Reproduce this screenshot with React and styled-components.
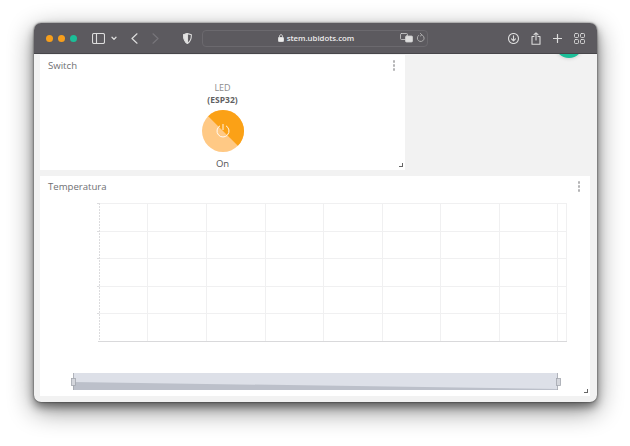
import styled, { createGlobalStyle } from 'styled-components';

const GlobalStyle = createGlobalStyle`
    html, body {
        margin: 0;
        background: #fff;
        font-family: "Open Sans", "Liberation Sans", sans-serif;
    }
`;

const Page = styled.div`
    width: 630px;
    height: 446px;
    padding: 23px 33px 0 34px;
    box-sizing: border-box;
    overflow: hidden;
`;

const Window = styled.div`
    height: 379px;
    border-radius: 7px;
    overflow: hidden;
    background: #f2f2f2;
    box-shadow: 0 5px 9px rgba(0, 0, 0, 0.42), 0 8px 26px rgba(0, 0, 0, 0.48), 0 0 2px rgba(0, 0, 0, 0.7);
    display: flex;
    flex-direction: column;
`;

const Toolbar = styled.div`
    position: relative;
    z-index: 2;
    height: 31px;
    flex: none;
    box-sizing: border-box;
    background: #5c5a5f;
    border-bottom: 1px solid #47464a;
    display: flex;
    align-items: center;
    padding-left: 12px;
`;

const Lights = styled.div`
    display: flex;
    gap: 5px;
    width: 46px;
`;

const Light = styled.span`
    width: 7px;
    height: 7px;
    border-radius: 50%;
    background: ${(p) => p.$color};
`;

const ToolIcon = styled.svg`
    flex: none;
    margin-left: ${(p) => p.$gap || 0}px;
    fill: none;
    stroke: ${(p) => p.$color || '#dcdcdc'};
    stroke-width: 1.1;
    stroke-linecap: round;
    stroke-linejoin: round;
`;

const UrlBar = styled.div`
    width: 226px;
    height: 17px;
    margin-left: 10px;
    box-sizing: border-box;
    border: 1px solid #6b696e;
    border-radius: 4px;
    display: flex;
    align-items: center;
    position: relative;
    justify-content: center;
    padding-left: 2px;
    font-size: 7.8px;
    font-weight: 600;
    color: #ececec;
    gap: 3px;
`;

const UrlTools = styled.div`
    position: absolute;
    right: 2px;
    top: 2px;
    display: flex;
    gap: 3px;
`;

const ActionIcons = styled.div`
    display: flex;
    align-items: center;
    margin-left: 80px;
    gap: 12px;
`;

const Content = styled.div`
    position: relative;
    flex: 1;
    padding: 1px 6px 0;
    display: flex;
    flex-direction: column;
    gap: 6px;
`;

const Fab = styled.div`
    position: absolute;
    top: -24px;
    left: 521px;
    width: 28px;
    height: 28px;
    border-radius: 50%;
    background: #1bbf98;
    box-shadow: 0 0 4px rgba(0, 0, 0, 0.2);
`;

const Card = styled.div`
    position: relative;
    width: ${(p) => p.$width}px;
    height: ${(p) => p.$height}px;
    box-sizing: border-box;
    background: #fff;
    padding: 4px 8px 0;
`;

const CardTitle = styled.div`
    font-size: 9.6px;
    line-height: 14px;
    color: #6f6f73;
`;

const Dots = styled.div`
    position: absolute;
    top: 5px;
    right: 10px;
    display: flex;
    flex-direction: column;
    gap: 1.5px;
`;

const Dot = styled.span`
    width: 2.5px;
    height: 2.5px;
    border-radius: 50%;
    background: #b4b4b6;
`;

const ResizeHandle = styled.span`
    position: absolute;
    right: 2px;
    bottom: 3px;
    width: 3px;
    height: 3px;
    border-right: 1px solid #666;
    border-bottom: 1px solid #666;
`;

const SwitchBody = styled.div`
    display: flex;
    flex-direction: column;
    align-items: center;
    padding-top: 9px;
    color: #8b8b8d;
    font-size: 9px;
    line-height: 12px;
`;

const DeviceName = styled.div`
    font-weight: 700;
    color: #5f5f62;
    font-size: 8.5px;
`;

const Knob = styled.svg`
    display: block;
    margin: 4px 0 6px;
`;

const StateLabel = styled.div`
    color: #555558;
    font-size: 9.5px;
`;

const ChartWrap = styled.div`
    padding: 9px 0 0 23px;
`;

const columns = [49, 108, 167, 225, 284, 342, 401, 459];
const rows = [28, 55, 83, 110];

const More = () => (
    <Dots>
        <Dot />
        <Dot />
        <Dot />
    </Dots>
);

const Chart = () => (
    <svg width="500" height="195" viewBox="-27 0 500 195" style={{ display: 'block' }}>
        <g stroke="#f0f0f1" strokeWidth="1">
            <line x1="0" y1="0.5" x2="469" y2="0.5" />
            {rows.map((y) => <line key={y} x1="0" y1={y + 0.5} x2="469" y2={y + 0.5} />)}
            {columns.map((x) => <line key={x} x1={x + 0.5} y1="0" x2={x + 0.5} y2="138" />)}
            <line x1="468.5" y1="0" x2="468.5" y2="138" />
        </g>
        <line x1="0" y1="138.5" x2="469" y2="138.5" stroke="#d9d9db" />
        <line x1="1.5" y1="0" x2="1.5" y2="138" stroke="#dcdcde" strokeDasharray="2 1" />
        {[0, 28, 55, 83, 110].map((y) => (
            <line key={y} x1="-1" y1={y + 0.5} x2="1" y2={y + 0.5} stroke="#dcdcde" />
        ))}
        <rect x="-25" y="170" width="485" height="17" fill="#dde0e8" />
        <polygon points="-25,179 460,186 460,187 -25,187" fill="#bcc0ca" />
        <g stroke="#a4a7ae" strokeWidth="0.8">
            <line x1="-24.5" y1="170" x2="-24.5" y2="187" />
            <line x1="459.5" y1="170" x2="459.5" y2="187" />
            <rect x="-26.5" y="175.5" width="4" height="7" fill="#d4d6dc" />
            <rect x="458.5" y="175.5" width="4" height="7" fill="#d4d6dc" />
        </g>
    </svg>
);

export default function App() {
    return (
        <Page>
            <GlobalStyle />
            <Window>
                <Toolbar>
                    <Lights>
                        <Light $color="#f79f1c" />
                        <Light $color="#f79f1c" />
                        <Light $color="#1bbf98" />
                    </Lights>
                    <ToolIcon width="13" height="11" viewBox="0 0 13 11">
                        <rect x="0.5" y="0.5" width="12" height="10" rx="1.5" />
                        <line x1="4.5" y1="0.5" x2="4.5" y2="10.5" />
                    </ToolIcon>
                    <ToolIcon width="6" height="5" viewBox="0 0 6 5" $gap={6} style={{ strokeWidth: 1.3 }}>
                        <path d="M1 1.2 L3 3.4 L5 1.2" />
                    </ToolIcon>
                    <ToolIcon width="7" height="11" viewBox="0 0 7 11" $gap={14} style={{ strokeWidth: 1.2 }}>
                        <path d="M6 0.8 L1 5.5 L6 10.2" />
                    </ToolIcon>
                    <ToolIcon width="7" height="11" viewBox="0 0 7 11" $gap={14} $color="#77757a" style={{ strokeWidth: 1.2 }}>
                        <path d="M1 0.8 L6 5.5 L1 10.2" />
                    </ToolIcon>
                    <ToolIcon width="9" height="11" viewBox="0 0 9 11" $gap={24}>
                        <path d="M4.5 0.6 L8.4 1.8 C8.4 6 7.4 8.8 4.5 10.4 C1.6 8.8 0.6 6 0.6 1.8 Z" />
                        <path d="M4.5 0.6 L0.6 1.8 C0.6 6 1.6 8.8 4.5 10.4 Z" fill="#e4e4e4" />
                    </ToolIcon>
                    <UrlBar>
                        <ToolIcon width="6" height="8" viewBox="0 0 6 8" style={{ strokeWidth: 1 }}>
                            <path d="M1.5 3.5 V2.3 C1.5 0.2 4.5 0.2 4.5 2.3 V3.5" />
                            <rect x="0.5" y="3.5" width="5" height="4" rx="0.6" fill="#ececec" />
                        </ToolIcon>
                        stem.ubidots.com
                        <UrlTools>
                            <ToolIcon width="13" height="10" viewBox="0 0 13 10" $color="#cfcfcf" style={{ strokeWidth: 0.8 }}>
                                <rect x="0.5" y="0.5" width="7" height="6" rx="1" />
                                <rect x="5.5" y="3" width="7" height="6" rx="1" fill="#dedede" />
                            </ToolIcon>
                            <ToolIcon width="9" height="10" viewBox="0 0 9 10" $color="#b8b8b8" style={{ strokeWidth: 0.9 }}>
                                <path d="M5.6 1.8 A3.4 3.4 0 1 1 2.6 2.4" />
                                <path d="M4.4 0.4 L5.8 1.8 L4.4 3" />
                            </ToolIcon>
                        </UrlTools>
                    </UrlBar>
                    <ActionIcons>
                        <ToolIcon width="11" height="11" viewBox="0 0 11 11">
                            <circle cx="5.5" cy="5.5" r="5" />
                            <path d="M5.5 2.8 V7.8 M3.5 5.9 L5.5 7.9 L7.5 5.9" />
                        </ToolIcon>
                        <ToolIcon width="10" height="13" viewBox="0 0 10 13">
                            <path d="M3 4.5 H1 V12.3 H9 V4.5 H7 M5 8 V0.8 M3 2.6 L5 0.8 L7 2.6" />
                        </ToolIcon>
                        <ToolIcon width="9" height="9" viewBox="0 0 9 9" style={{ strokeWidth: 1.2 }}>
                            <path d="M4.5 0.5 V8.5 M0.5 4.5 H8.5" />
                        </ToolIcon>
                        <ToolIcon width="11" height="11" viewBox="0 0 11 11" style={{ strokeWidth: 0.9 }}>
                            <rect x="0.5" y="0.5" width="4" height="4" rx="1" />
                            <rect x="6.5" y="0.5" width="4" height="4" rx="1" />
                            <rect x="0.5" y="6.5" width="4" height="4" rx="1" />
                            <rect x="6.5" y="6.5" width="4" height="4" rx="1" />
                        </ToolIcon>
                    </ActionIcons>
                </Toolbar>
                <Content>
                    <Fab />
                    <Card $width={365} $height={115}>
                        <CardTitle>Switch</CardTitle>
                        <More />
                        <SwitchBody>
                            LED
                            <DeviceName>(ESP32)</DeviceName>
                            <Knob width="42" height="42" viewBox="0 0 42 42">
                                <circle cx="21" cy="21" r="21" fill="#ffc985" />
                                <path d="M6.15 6.15 A21 21 0 0 1 35.85 35.85 Z" fill="#fba116" />
                                <path d="M18 15.8 A6 6 0 1 0 24 15.8" fill="none" stroke="#fff" strokeWidth="0.9" />
                                <line x1="21" y1="14" x2="21" y2="20" stroke="#fff" strokeWidth="0.9" />
                            </Knob>
                            <StateLabel>On</StateLabel>
                        </SwitchBody>
                        <ResizeHandle />
                    </Card>
                    <Card $width={550} $height={220}>
                        <CardTitle>Temperatura</CardTitle>
                        <More />
                        <ChartWrap>
                            <Chart />
                        </ChartWrap>
                        <ResizeHandle />
                    </Card>
                </Content>
            </Window>
        </Page>
    );
}
